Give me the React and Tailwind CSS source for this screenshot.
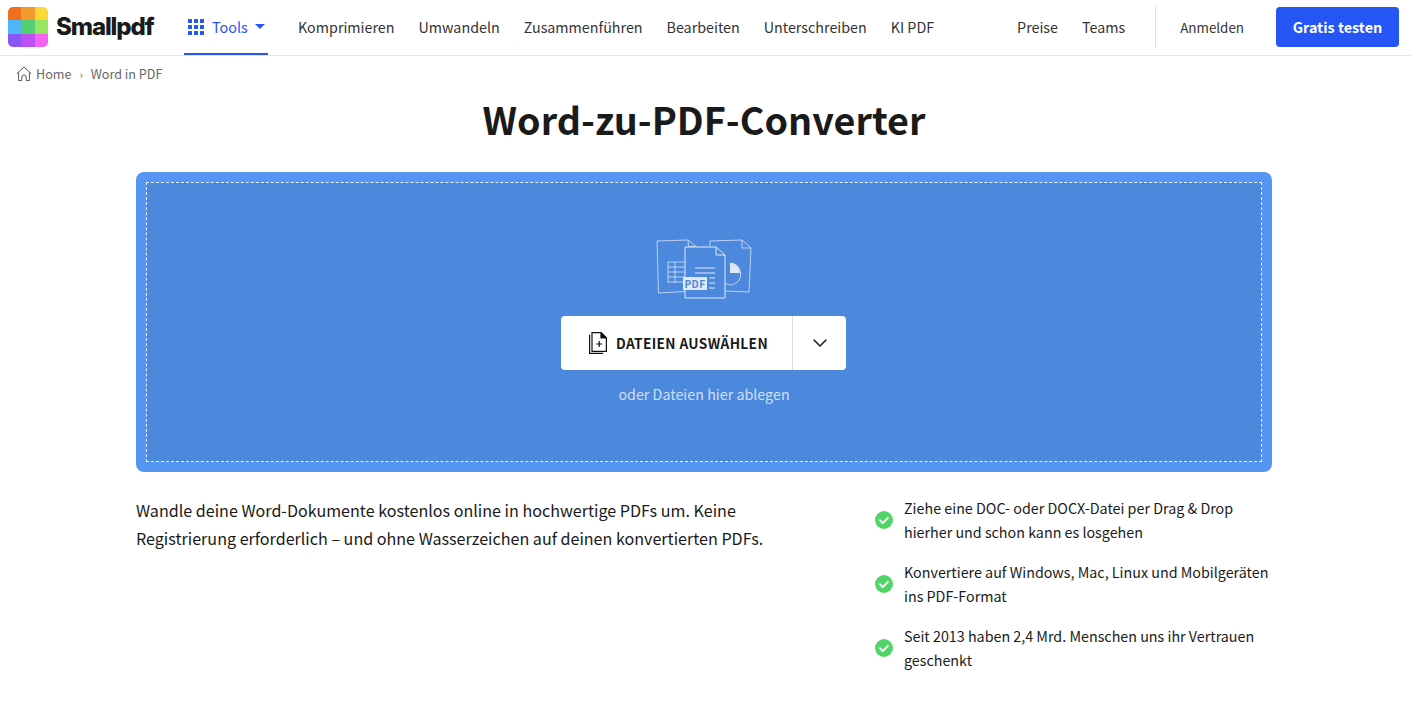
import { ChevronDown } from 'lucide-react'

const FONT = { fontFamily: '"Noto Sans CJK SC", "Noto Sans", sans-serif' }

const NAV = ['Komprimieren', 'Umwandeln', 'Zusammenführen', 'Bearbeiten', 'Unterschreiben', 'KI PDF']

const BENEFITS = [
  ['Ziehe eine DOC- oder DOCX-Datei per Drag & Drop', 'hierher und schon kann es losgehen'],
  ['Konvertiere auf Windows, Mac, Linux und Mobilgeräten', 'ins PDF-Format'],
  ['Seit 2013 haben 2,4 Mrd. Menschen uns ihr Vertrauen', 'geschenkt'],
]

const LOGO_COLORS = ['#f26f1f', '#f59b2b', '#fdd638', '#4fb6fb', '#50cf73', '#98e465', '#8b55f7', '#bd50f3', '#f463f4']

function Logo() {
  return (
    <div className="grid grid-cols-3 grid-rows-3 w-10 h-10 rounded-[5px] overflow-hidden">
      {LOGO_COLORS.map(c => (
        <div key={c} style={{ backgroundColor: c }} />
      ))}
    </div>
  )
}

function GridIcon() {
  return (
    <svg width="16" height="16" viewBox="0 0 16 16" fill="#2555f5">
      {[0, 6, 12].map(y =>
        [0, 6, 12].map(x => <rect key={`${x}-${y}`} x={x} y={y} width="4" height="4" rx="0.5" />)
      )}
    </svg>
  )
}

function HomeIcon() {
  return (
    <svg width="16" height="16" viewBox="0 0 16 16" fill="none" stroke="#555" strokeWidth="1">
      <path d="M0.8 7.6 8 1l7.2 6.6M2.6 6.4v8.2h3.2v-3.4a2.2 2.2 0 0 1 4.4 0v3.4h3.2V6.4" strokeLinejoin="round" />
    </svg>
  )
}

function FilesArt() {
  return (
    <svg width="96" height="60" viewBox="0 0 96 60" fill="none" stroke="#dfe9f8" strokeWidth="1" strokeLinejoin="round">
      {/* left sheet */}
      <g strokeOpacity="0.75">
        <path d="M1 2 32 1l9 7M1 2l1.500 52L29 52.500" />
        <path d="M32 1l.5 6.500H39" />
        <path d="M12 23h17M12 28h17M12 33h17M12 38h17M12 43h17M12 23v21M19 23v21" />
      </g>
      {/* right sheet */}
      <g strokeOpacity="0.75">
        <path d="M54 7V2L86 1l9 8-2 44-24-1" />
        <path d="M86 1v8h9" />
        <path d="M69 44.500a10.500 10.500 0 0 0 15.500-10.500" />
        <path d="M74 24a10 10 0 0 1 10.500 10" />
      </g>
      <path d="M74 24a10 10 0 0 1 10 10H74z" fill="#dfe9f8" stroke="none" />
      {/* front sheet */}
      <path d="M29 8h31l9 8v43H29z" fill="#4c88dc" />
      <path d="M60 8v8h9" />
      <path d="M39 29h20M39 34h20M53 39h6M53 44h6M53 49h6" />
      <rect x="27" y="38" width="24" height="13" fill="#dfe9f8" stroke="none" />
      <text x="39" y="48.500" textAnchor="middle" fontSize="10" fontWeight="700" fill="#4c88dc" stroke="none" letterSpacing="0.5" style={FONT}>PDF</text>
    </svg>
  )
}

function DocPlusIcon() {
  return (
    <svg width="18" height="22" viewBox="0 0 18 22" fill="none" stroke="#111" strokeWidth="1.200">
      <path d="M0.600 2.500v18.900h13.500" />
      <path d="M3 .6h9l5.400 5.400v13.400H3z" fill="#fff" />
      <path d="M12 .6l5.400 5.400H12z" fill="#111" />
      <path d="M10.200 9v6M7.200 12h6" />
    </svg>
  )
}

function CheckBadge() {
  return (
    <svg width="18" height="18" viewBox="0 0 18 18" className="shrink-0">
      <circle cx="9" cy="9" r="9" fill="#52d468" />
      <path d="M5 9.300l2.800 2.700L13 6.800" fill="none" stroke="#fff" strokeWidth="1.800" strokeLinecap="round" strokeLinejoin="round" />
    </svg>
  )
}

export default function App() {
  return (
    <div style={FONT} className="min-h-screen bg-white text-[#1a1a1a]">
      <header className="flex items-center h-14 border-b border-[#e5e5e5] pl-2 pr-3 pb-px">
        <Logo />
        <span style={{ fontFamily: 'Inter, sans-serif' }} className="ml-2 w-[98px] text-[24px] leading-none font-extrabold tracking-[-1.1px] text-[#1a1a1a]">
          Smallpdf
        </span>
        <div className="ml-[30px] self-stretch -mb-px w-[84px] flex items-center pl-1 border-b-2 border-[#2555f5] text-[#2555f5] text-[14.4px] leading-6">
          <GridIcon />
          <span className="ml-2">Tools</span>
          <span className="ml-[7px] w-0 h-0 border-x-[5px] border-x-transparent border-t-[5px] border-t-[#2555f5]" />
        </div>
        <nav className="ml-[30px] flex gap-6 text-[14.3px] leading-6 text-[#333]">
          {NAV.map(item => (
            <span key={item}>{item}</span>
          ))}
        </nav>
        <div className="ml-auto flex items-center h-full text-[14.3px] leading-6 text-[#333]">
          <span>Preise</span>
          <span className="ml-6">Teams</span>
          <div className="ml-[30px] w-px h-[42px] bg-[#e0e0e0]" />
          <span className="ml-6 text-[13.4px]">Anmelden</span>
          <button className="ml-8 w-[123px] h-10 rounded bg-[#2555f5] text-white font-bold text-[14.4px]">
            Gratis testen
          </button>
        </div>
      </header>

      <div className="flex items-center h-9 pl-4 text-[12.6px] leading-5 text-[#666]">
        <HomeIcon />
        <span className="ml-1">Home</span>
        <span className="mx-2 text-[11px]">›</span>
        <span>Word in PDF</span>
      </div>

      <main className="ml-[136px] w-[1136px]">
        <h1 className="mt-0.5 text-center text-[37.7px] leading-[50px] font-bold text-[#1a1a1a]">Word-zu-PDF-Converter</h1>

        <div className="mt-7 h-[300px] rounded-lg bg-[#5596f5] p-2.5">
          <div className="h-full border border-dashed border-white/90 bg-[#4c88dc] flex flex-col items-center pt-14">
            <FilesArt />
            <div className="mt-[17px] mr-px flex h-[54px] w-[285px] rounded bg-white">
              <div className="flex flex-1 items-center pl-[28px] gap-[9px] border-r border-[#ddd]">
                <DocPlusIcon />
                <span className="text-[13.7px] font-bold tracking-[0.35px] text-[#1a1a1a]">DATEIEN AUSWÄHLEN</span>
              </div>
              <div className="flex w-[53px] items-center justify-center">
                <ChevronDown size={24} strokeWidth={1.6} color="#222" />
              </div>
            </div>
            <p className="mt-3 text-[14.3px] leading-6 text-white/75">oder Dateien hier ablegen</p>
          </div>
        </div>

        <div className="mt-6 flex">
          <p className="w-[739px] text-[16.1px] leading-7 text-[#1a1a1a]">
            Wandle deine Word-Dokumente kostenlos online in hochwertige PDFs um. Keine
            <br />
            Registrierung erforderlich – und ohne Wasserzeichen auf deinen konvertierten PDFs.
          </p>
          <ul className="flex flex-col gap-4 text-[14.3px] leading-6 text-[#1a1a1a]">
            {BENEFITS.map(([a, b]) => (
              <li key={a} className="flex items-center gap-[11px]">
                <CheckBadge />
                <span className="whitespace-nowrap">
                  {a}
                  <br />
                  {b}
                </span>
              </li>
            ))}
          </ul>
        </div>
      </main>
    </div>
  )
}
